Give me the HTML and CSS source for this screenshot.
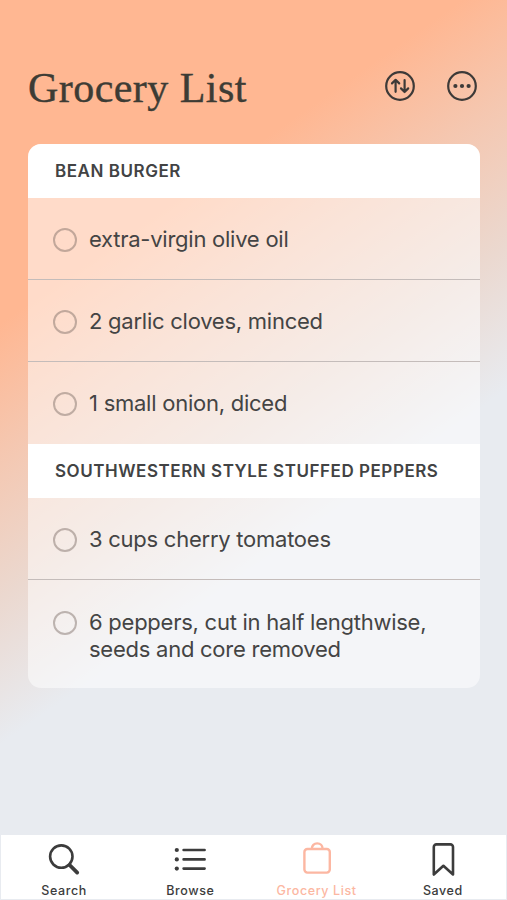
FILE: index.html
```html
<!DOCTYPE html>
<html lang="en">
<head>
    <meta charset="UTF-8">
    <meta name="viewport" content="width=device-width, initial-scale=1.0">
    <title>Grocery List</title>
    <link rel="stylesheet" href="styles.css">
</head>
<body>
    <header>
        <h1>Grocery List</h1>
        <div class="actions">
            <svg width="32" height="32" viewBox="0 0 32 32" fill="none" stroke="#3d3a38" stroke-width="2.2" stroke-linecap="round" stroke-linejoin="round">
                <circle cx="16" cy="16" r="13.8"/>
                <path d="M11.600 21.800V10M8 13.400l3.600-3.600 3.600 3.600M20.600 10v12M17 18.400l3.600 3.600 3.600-3.600"/>
            </svg>
            <svg width="32" height="32" viewBox="0 0 32 32" fill="none" stroke="#3d3a38" stroke-width="2.2">
                <circle cx="16" cy="16" r="13.8"/>
                <g fill="#3d3a38" stroke="none">
                    <circle cx="9.4" cy="16" r="2.1"/>
                    <circle cx="16" cy="16" r="2.1"/>
                    <circle cx="22.6" cy="16" r="2.1"/>
                </g>
            </svg>
        </div>
    </header>

    <main class="list">
        <h2>BEAN BURGER</h2>
        <ul>
            <li><span class="check"></span><span>extra-virgin olive oil</span></li>
            <li><span class="check"></span><span>2 garlic cloves, minced</span></li>
            <li><span class="check"></span><span>1 small onion, diced</span></li>
        </ul>
        <h2>SOUTHWESTERN STYLE STUFFED PEPPERS</h2>
        <ul>
            <li><span class="check"></span><span>3 cups cherry tomatoes</span></li>
            <li class="tall"><span class="check"></span><span>6 peppers, cut in half lengthwise,<br>seeds and core removed</span></li>
        </ul>
    </main>

    <nav>
        <a href="#">
            <svg width="36" height="36" viewBox="0 0 36 36" fill="none" stroke="currentColor" stroke-linecap="round">
                <circle cx="15.3" cy="15.6" r="11.2" stroke-width="2.6"/>
                <path d="M23.6 24l7.6 7.6" stroke-width="3.8"/>
            </svg>
            <span>Search</span>
        </a>
        <a href="#">
            <svg width="36" height="36" viewBox="0 0 36 36" fill="none" stroke="currentColor" stroke-width="2.6" stroke-linecap="round">
                <path d="M11.600 9h21M11.600 18.400h21M11.600 27.600h21"/>
                <g fill="currentColor" stroke="none">
                    <circle cx="4.8" cy="9" r="2.1"/>
                    <circle cx="4.8" cy="18.4" r="2.1"/>
                    <circle cx="4.8" cy="27.6" r="2.1"/>
                </g>
            </svg>
            <span>Browse</span>
        </a>
        <a href="#" class="active">
            <svg width="36" height="36" viewBox="0 0 36 36" fill="none" stroke="currentColor" stroke-width="2.4">
                <rect x="5.4" y="8" width="25.4" height="23.6" rx="3"/>
                <path d="M12.8 8c0-3.400 2.300-5.600 5.400-5.600s5.400 2.200 5.400 5.600"/>
            </svg>
            <span>Grocery List</span>
        </a>
        <a href="#">
            <svg width="36" height="36" viewBox="0 0 36 36" fill="none" stroke="currentColor" stroke-width="2.6" stroke-linejoin="round">
                <path d="M8.800 33.500V6a2.600 2.600 0 0 1 2.600-2.600h14a2.600 2.600 0 0 1 2.600 2.600v27.500l-9.600-8.700z"/>
            </svg>
            <span>Saved</span>
        </a>
    </nav>
</body>
</html>
```
FILE: styles.css
```css
* {
    box-sizing: border-box;
}
body {
    margin: 0;
    height: 900px;
    display: flex;
    flex-direction: column;
    overflow: hidden;
    background: linear-gradient(145deg, #ffb792 0, #ffb792 265px, #f5c7b0 370px, #ebd8cf 490px, #e8ebf0 610px);
    font-family: Inter, "Liberation Sans", sans-serif;
    color: #444;
}
header {
    display: flex;
    justify-content: space-between;
    align-items: center;
    height: 64px;
    margin: 54px 29px 26px 28px;
}
h1 {
    margin: 0;
    padding-top: 4px;
    font-family: "Liberation Serif", serif;
    font-weight: normal;
    font-size: 42px;
    line-height: 64px;
    letter-spacing: 0.45px;
    -webkit-text-stroke: 0.4px #3d3c35;
    color: #3d3c35;
}
.actions {
    display: flex;
    gap: 30px;
}
.list {
    width: 452px;
    margin: 0 0 0 28px;
    border-radius: 13px;
    overflow: hidden;
    background: rgba(255, 255, 255, 0.5);
}
h2 {
    margin: 0;
    height: 54px;
    padding-left: 27px;
    background: #fff;
    font-size: 17px;
    font-weight: 600;
    line-height: 55px;
    letter-spacing: 0.54px;
    color: #424344;
    white-space: nowrap;
}
ul {
    list-style: none;
    margin: 0;
    padding: 0;
}
li {
    display: flex;
    gap: 12px;
    height: 82px;
    padding: 28px 0 0 25px;
    border-bottom: 1px solid #c4bcba;
    font-size: 22px;
    line-height: 27px;
    letter-spacing: -0.25px;
    white-space: nowrap;
}
li:last-child {
    border-bottom: none;
}
.tall {
    height: 108px;
    padding-top: 29px;
}
.check {
    width: 24px;
    height: 24px;
    margin-top: 2px;
    border: 2px solid rgba(120, 105, 98, 0.45);
    border-radius: 50%;
}
nav {
    display: flex;
    height: 64px;
    margin: auto 1px 1px;
    background: #fff;
}
nav a {
    flex: 1;
    display: flex;
    flex-direction: column;
    align-items: center;
    padding-top: 6px;
    text-decoration: none;
    font-size: 12.5px;
    font-weight: 500;
    line-height: 15px;
    letter-spacing: 0.6px;
    color: #3c3c3c;
}
nav span {
    margin-top: 6px;
}
nav .active {
    color: #fcb7a2;
}
```
